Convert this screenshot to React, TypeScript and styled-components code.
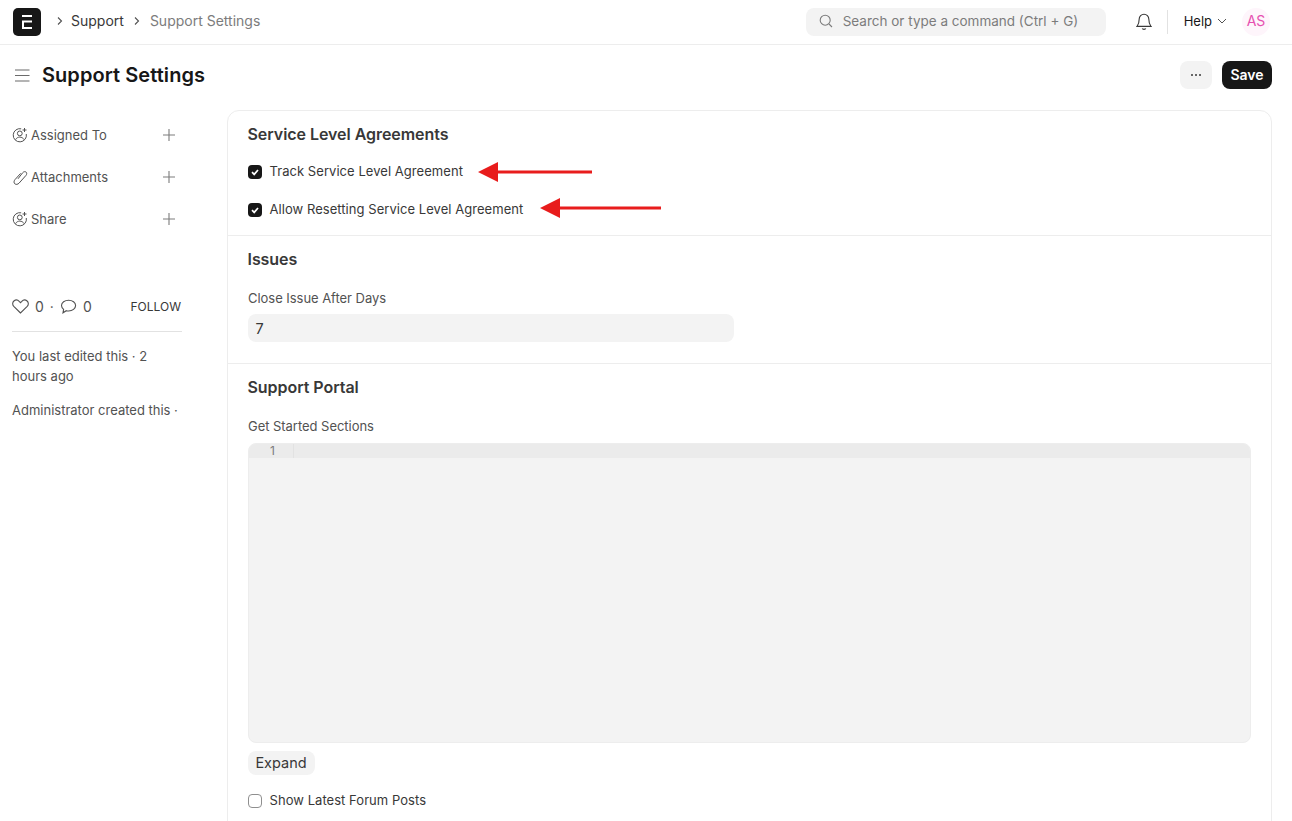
import React from "react";
import styled, { createGlobalStyle } from "styled-components";

const Global = createGlobalStyle`
  html, body { margin: 0; padding: 0; height: 821px; overflow: hidden; background: #fff; }
  body { font-family: Inter, "Noto Sans", sans-serif; color: #171717; }
  * { box-sizing: border-box; }
`;

const Page = styled.div`width: 1292px; height: 821px; overflow: hidden;`;

const Navbar = styled.header`
  height: 45px; border-bottom: 1px solid #ededed; display: flex; align-items: center;
  padding: 0 22px 1px 13px;
`;
const Logo = styled.div`
  width: 28px; height: 28px; border-radius: 5px; background: #171717; display: flex;
  align-items: center; justify-content: center; margin-right: 11px;
`;
const Crumb = styled.span<{ $muted?: boolean; $first?: boolean }>`
  font-size: 14px; line-height: 20px; color: ${p => (p.$muted ? "#7c7c7c" : "#383838")};
  margin-left: ${p => (p.$first ? "-2px" : "0")};
`;
const CrumbSep = styled.span`
  display: flex; width: 16px; justify-content: center; align-items: center; color: #525252;
`;
const Crumbs = styled.nav`display: flex; align-items: center; gap: 5px; padding-bottom: 2px;`;
const Spacer = styled.div`flex: 1;`;
const Search = styled.div`
  width: 300px; height: 28px; border-radius: 8px; background: #f3f3f3; display: flex;
  align-items: center; padding: 0 0 2px 13px; gap: 10px; font-size: 13.5px; color: #7c7c7c;
  margin-right: 30px; white-space: nowrap;
`;
const Divider = styled.div`width: 1px; height: 24px; background: #e2e2e2; margin: 0 16px 0 15px;`;
const Help = styled.div`
  display: flex; align-items: center; gap: 5px; font-size: 13px; color: #171717;
  margin-right: 15px; padding-bottom: 2px;
`;
const Avatar = styled.div`
  width: 28px; height: 28px; border-radius: 50%; background: #fef5fb; color: #e64fb0;
  display: flex; align-items: center; justify-content: center; font-size: 14px; padding-bottom: 2px;
`;

const PageHead = styled.div`
  height: 65px; display: flex; align-items: center; padding: 0 20px 5px 15px;
`;
const Title = styled.h1`
  font-size: 20px; line-height: 28px; font-weight: 600; margin: 0 0 0 12px; color: #171717;
  letter-spacing: 0.06px;
`;
const MenuBtn = styled.button`
  width: 32px; height: 28px; border: 0; border-radius: 8px; background: #f3f3f3; display: flex;
  align-items: center; justify-content: center; margin-right: 10px; padding: 0;
`;
const SaveBtn = styled.button`
  width: 50px; height: 28px; border: 0; border-radius: 8px; background: #171717; color: #fff;
  font: 600 14px Inter, sans-serif; padding: 0 0 1px;
`;

const Body = styled.div`display: flex; align-items: flex-start; padding: 0 20px 0 12px;`;
const Sidebar = styled.aside`width: 170px; margin-right: 45px; flex-shrink: 0; padding-top: 10px;`;
const SideRow = styled.div`
  height: 42px; display: flex; align-items: center; font-size: 13px; color: #525252; gap: 3px;
  padding-bottom: 12px;
`;
const SideLabel = styled.span`flex: 1;`;
const PlusWrap = styled.span`display: flex; margin-right: 6px; color: #7c7c7c;`;
const Stats = styled.div`
  margin-top: 49px; display: flex; align-items: center; font-size: 14px; color: #525252;
  padding: 0 1px 14px 0; height: 37px; border-bottom: 1px solid #e2e2e2;
`;
const StatNum = styled.span`margin-left: 6px;`;
const Dot = styled.span`margin: 0 6px;`;
const Follow = styled.span`margin-left: auto; font-size: 12px; color: #383838;`;
const SideNote = styled.p<{ $gap?: number }>`
  margin: ${p => p.$gap ?? 0}px 0 0; font-size: 13px; line-height: 20px; color: #525252;
`;

const Card = styled.main`
  position: relative; flex: 1; height: 760px; border: 1px solid #ededed; border-radius: 12px;
  overflow: hidden;
`;
const Section = styled.section<{ $height?: number; $last?: boolean }>`
  padding: 13px 20px 0 20px; border-bottom: ${p => (p.$last ? "0" : "1px solid #ededed")};
  height: ${p => (p.$height ? `${p.$height}px` : "auto")};
`;
const SectionTitle = styled.h2`
  margin: 0 0 0 -0.5px; font-size: 16px; line-height: 20px; font-weight: 600; color: #383838;
  letter-spacing: -0.05px;
`;
const CheckRow = styled.label<{ $top: number }>`
  display: flex; align-items: center; gap: 7.5px; height: 20px; margin-top: ${p => p.$top}px;
  font-size: 13px; letter-spacing: 0.05px; color: #383838;
`;
const CheckText = styled.span`padding-bottom: 2px;`;
const Box = styled.span<{ $on?: boolean }>`
  width: 14px; height: 14px; border-radius: 4px; display: flex; align-items: center; justify-content: center;
  background: ${p => (p.$on ? "#171717" : "#fff")}; border: ${p => (p.$on ? "0" : "1px solid #8f8f8f")};
`;
const FieldLabel = styled.div`
  margin-top: 21px; font-size: 13px; line-height: 16px; color: #525252; letter-spacing: -0.04px;
`;
const Input = styled.div`
  width: 486px; height: 28px; border-radius: 8px; background: #f3f3f3; margin-top: 8px;
  padding: 0 7.5px; font-size: 14.5px; line-height: 30px; color: #383838;
`;
const Editor = styled.div`
  height: 300px; margin-top: 9px; border-radius: 8px; background: #f3f3f3; overflow: hidden;
  border: 1px solid #ededed;
`;
const EditorLine = styled.div`
  height: 14px; background: #ebebeb; display: flex; font: 12px/14px Inter, sans-serif; color: #7c7c7c;
`;
const Gutter = styled.div`width: 45px; padding-right: 18px; text-align: right; border-right: 1px solid #e2e2e2;`;
const Expand = styled.button`
  display: block; width: 67px; height: 24px; margin-top: 8px; border: 0; border-radius: 8px;
  background: #f3f3f3; color: #383838; font: 14.5px Inter, sans-serif; padding: 0 1px 2px 0;
`;
const ArrowSvg = styled.svg<{ $left: number; $top: number }>`
  position: absolute; left: ${p => p.$left}px; top: ${p => p.$top}px;
`;

const Chevron = () => (
  <svg width="8" height="10" viewBox="0 0 8 10" fill="none" stroke="currentColor" strokeWidth="1.1"><path d="M2 1.5 5.5 5 2 8.5" /></svg>
);
const Plus = () => (
  <svg width="14" height="14" viewBox="0 0 14 14" fill="none" stroke="currentColor" strokeWidth="1.1"><path d="M7 1v12M1 7h12" /></svg>
);
const UserPlus = () => (
  <svg width="16" height="16" viewBox="0 0 16 16" fill="none" stroke="#525252" strokeWidth="1">
    <path d="M9.2 1.8A6.6 6.6 0 1 0 14.3 7" />
    <circle cx="7.8" cy="6.4" r="2.4" />
    <path d="M3.6 12.6c.8-1.6 2.4-2.5 4.2-2.5s3.4.9 4.2 2.5" />
    <path d="M12.5 1v4M10.5 3h4" />
  </svg>
);
const Clip = () => (
  <svg width="16" height="16" viewBox="0 0 16 16" fill="none" stroke="#525252" strokeWidth="1">
    <path d="M6 9.8 10.6 3.8c1-1.2 2.6-1.5 3.5-.7.9.8.8 2.3-.2 3.4l-6.8 7.6c-1.3 1.4-3.2 1.7-4.3.7-1.1-1-1-2.8.2-4.2l5.6-6.2" />
  </svg>
);
const Check = () => (
  <svg width="10" height="10" viewBox="0 0 10 10" fill="none" stroke="#fff" strokeWidth="1.7"><path d="M2 5.2 4.2 7.4 8 3" /></svg>
);
const LeftArrow = ({ width, left, top }: { width: number; left: number; top: number }) => (
  <ArrowSvg $left={left} $top={top} width={width} height="22" viewBox={`0 0 ${width} 22`}>
    <path d={`M0 11 20 1V9.4H${width}V12.6H20V21Z`} fill="#e81c1c" />
  </ArrowSvg>
);

export default function App() {
  return (
    <Page>
      <Global />
      <Navbar>
        <Logo>
          <svg width="12" height="14" viewBox="0 0 12 14" fill="none" stroke="#fff" strokeWidth="2">
            <path d="M1 1h10M1 13h10M1 6.4h10" />
            <path d="M2 6.4V13" />
          </svg>
        </Logo>
        <Crumbs>
          <CrumbSep><Chevron /></CrumbSep>
          <Crumb $first>Support</Crumb>
          <CrumbSep><Chevron /></CrumbSep>
          <Crumb $muted>Support Settings</Crumb>
        </Crumbs>
        <Spacer />
        <Search>
          <svg width="14" height="14" viewBox="0 0 14 14" fill="none" stroke="#7c7c7c" strokeWidth="1.1">
            <circle cx="6.2" cy="6.2" r="5" /><path d="m10 10 3 3" />
          </svg>
          Search or type a command (Ctrl + G)
        </Search>
        <svg width="16" height="18" viewBox="0 0 16 18" fill="none" stroke="#383838" strokeWidth="1.1">
          <path d="M8 1.2a4.8 4.8 0 0 0-4.8 4.8c0 4.5-1.2 6-2.2 7.4h14c-1-1.4-2.2-2.9-2.2-7.4A4.8 4.8 0 0 0 8 1.2Z" />
          <path d="M6.2 15.6c.5 1 3.1 1 3.6 0" />
        </svg>
        <Divider />
        <Help>
          Help
          <svg width="10" height="6" viewBox="0 0 10 6" fill="none" stroke="#525252" strokeWidth="1"><path d="m1 1 4 4 4-4" /></svg>
        </Help>
        <Avatar>AS</Avatar>
      </Navbar>

      <PageHead>
        <svg width="15" height="13" viewBox="0 0 15 13" fill="none" stroke="#6b6b6b" strokeWidth="1.1">
          <path d="M0 1h14.5M0 6.5h14.5M0 12h14.5" />
        </svg>
        <Title>Support Settings</Title>
        <Spacer />
        <MenuBtn>
          <svg width="12" height="4" viewBox="0 0 12 4" fill="#383838">
            <circle cx="2" cy="2" r="1" /><circle cx="6" cy="2" r="1" /><circle cx="10" cy="2" r="1" />
          </svg>
        </MenuBtn>
        <SaveBtn>Save</SaveBtn>
      </PageHead>

      <Body>
        <Sidebar>
          <SideRow><UserPlus /><SideLabel>Assigned To</SideLabel><PlusWrap><Plus /></PlusWrap></SideRow>
          <SideRow><Clip /><SideLabel>Attachments</SideLabel><PlusWrap><Plus /></PlusWrap></SideRow>
          <SideRow><UserPlus /><SideLabel>Share</SideLabel><PlusWrap><Plus /></PlusWrap></SideRow>
          <Stats>
            <svg width="17" height="15" viewBox="0 0 17 15" fill="none" stroke="#525252" strokeWidth="1.1">
              <path d="M8.5 14 1.8 7.4C.2 5.7.4 3.3 1.9 2c1.7-1.4 4-1.1 5.3.4l1.3 1.3 1.3-1.3c1.3-1.5 3.6-1.8 5.3-.4 1.5 1.3 1.7 3.7.1 5.4Z" />
            </svg>
            <StatNum>0</StatNum>
            <Dot>·</Dot>
            <svg width="17" height="15" viewBox="0 0 17 15" fill="none" stroke="#525252" strokeWidth="1.1">
              <path d="M8.6 1.2c3.9 0 7 2.4 7 5.4s-3.1 5.4-7 5.4c-.8 0-1.6-.1-2.3-.3L3 13.8l.6-3.4C2.3 9.4 1.5 8.1 1.5 6.6c0-3 3.2-5.4 7.1-5.4Z" />
            </svg>
            <StatNum>0</StatNum>
            <Follow>FOLLOW</Follow>
          </Stats>
          <SideNote $gap={14}>You last edited this · 2 hours ago</SideNote>
          <SideNote $gap={14}>Administrator created this ·</SideNote>
        </Sidebar>

        <Card>
          <Section $height={125}>
            <SectionTitle>Service Level Agreements</SectionTitle>
            <CheckRow $top={18}><Box $on><Check /></Box><CheckText>Track Service Level Agreement</CheckText></CheckRow>
            <CheckRow $top={18}><Box $on><Check /></Box><CheckText>Allow Resetting Service Level Agreement</CheckText></CheckRow>
          </Section>
          <Section $height={128}>
            <SectionTitle>Issues</SectionTitle>
            <FieldLabel>Close Issue After Days</FieldLabel>
            <Input>7</Input>
          </Section>
          <Section $last>
            <SectionTitle>Support Portal</SectionTitle>
            <FieldLabel>Get Started Sections</FieldLabel>
            <Editor>
              <EditorLine><Gutter>1</Gutter></EditorLine>
            </Editor>
            <Expand>Expand</Expand>
            <CheckRow $top={16}><Box /><CheckText>Show Latest Forum Posts</CheckText></CheckRow>
          </Section>
          <LeftArrow width={114} left={250} top={50} />
          <LeftArrow width={121} left={312} top={86} />
        </Card>
      </Body>
    </Page>
  );
}
